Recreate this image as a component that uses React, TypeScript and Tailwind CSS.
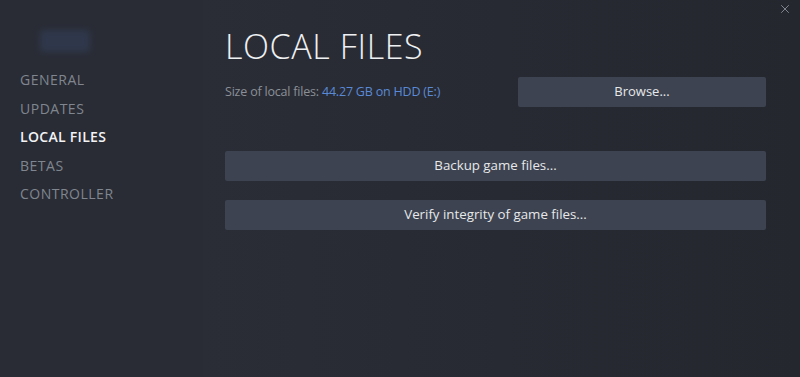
import { X } from 'lucide-react';

const NAV = ['GENERAL', 'UPDATES', 'LOCAL FILES', 'BETAS', 'CONTROLLER'];
const ACTIVE = 'LOCAL FILES';

export default function App() {
  return (
    <div className="flex h-[377px] w-[800px] overflow-hidden bg-[#262930] font-['Open_Sans',sans-serif]">
      {/* Sidebar */}
      <div className="flex w-[203px] shrink-0 flex-col bg-[#292c35] pt-[30px]">
        {/* blurred game logo */}
        <div className="ml-[40px] h-[22px] w-[50px] rounded-sm bg-[#33405a] opacity-60 blur-[3px]" />
        <div className="mt-[14px] flex flex-col">
          {NAV.map((item) => (
            <div
              key={item}
              className={
                item === ACTIVE
                  ? 'h-[28.5px] pl-[20px] text-[14px] leading-[28.5px] tracking-[0.3px] font-semibold text-[#f2f3f4]'
                  : 'h-[28.5px] pl-[20px] text-[14px] leading-[28.5px] tracking-[0.5px] text-[#80868f]'
              }
            >
              {item}
            </div>
          ))}
        </div>
      </div>

      {/* Main panel */}
      <div className="relative flex flex-1 flex-col bg-gradient-to-r from-[#2a2d36] to-[#24272e] pl-[22px] pr-[34px] pt-[26px]">
        <button className="absolute right-[8px] top-[2px] text-[#8d939b]">
          <X size={14} strokeWidth={1.5} />
        </button>

        <h1 className="text-[34px] leading-[40px] font-light tracking-[0.6px] text-[#eef0f2]">LOCAL FILES</h1>

        <div className="mt-[11px] flex items-center justify-between">
          <div className="text-[12.5px] tracking-[-0.2px] text-[#8b9098]">
            Size of local files: <span className="text-[#5a8ad6]">44.27 GB on HDD (E:)</span>
          </div>
          <button className="h-[30px] w-[248px] rounded-[2px] bg-[#3d4350] text-[13px] text-[#e6e8ea]">
            Browse...
          </button>
        </div>

        <button className="mt-[44px] h-[30px] w-full rounded-[2px] bg-[#3d4350] text-[13.3px] text-[#e6e8ea]">
          Backup game files...
        </button>
        <button className="mt-[19px] h-[30px] w-full rounded-[2px] bg-[#3d4350] text-[13.3px] text-[#e6e8ea]">
          Verify integrity of game files...
        </button>
      </div>
    </div>
  );
}
